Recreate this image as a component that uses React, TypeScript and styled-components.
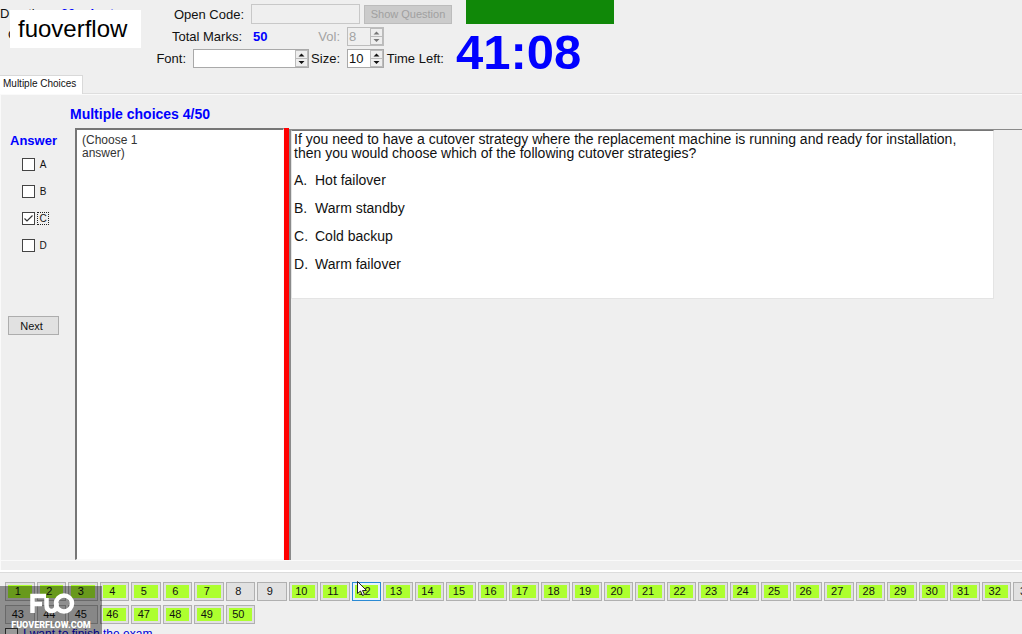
import React, { useState } from 'react';
import styled, { createGlobalStyle, css } from 'styled-components';

const Global = createGlobalStyle`
  * { box-sizing: border-box; }
  html, body { margin: 0; background: #efefef; }
  body, button, input, select { font-family: "Liberation Sans", Arial, sans-serif; }
  body { overflow: hidden; color: #111; }
`;

const Page = styled.div`
  position: relative;
  display: flex;
  flex-direction: column;
  height: 100vh;
  overflow: hidden;
  background: #efefef;
  font-size: 13px;
`;

const Header = styled.header`
  display: flex;
  flex: none;
  height: 75px;
`;

const Info = styled.div`
  flex: none;
  width: 156px;
  padding-top: 4px;
`;

const InfoRow = styled.div<{ $indent?: boolean }>`
  display: flex;
  gap: 8px;
  height: 21px;
  line-height: 20px;
  padding-left: ${(p) => (p.$indent ? '8px' : '0')};
  white-space: nowrap;
`;

const Fields = styled.div`
  flex: none;
  display: flex;
  flex-direction: column;
  width: 300px;
  padding-top: 3px;
`;

const FieldRow = styled.div`
  display: flex;
  align-items: center;
  height: 22px;
`;

const Label = styled.label<{ $width: number; $muted?: boolean }>`
  flex: none;
  width: ${(p) => p.$width}px;
  padding-right: 7px;
  text-align: right;
  white-space: nowrap;
  color: ${(p) => (p.$muted ? '#a3a3a3' : '#111')};
`;

const Value = styled.strong`
  color: #0000ff;
`;

const Marks = styled(Value)`
  width: 63px;
  padding-left: 4px;
`;

const CodeInput = styled.input`
  width: 109px;
  height: 20px;
  margin-right: 4px;
  padding: 0 3px;
  border: 1px solid #c8c8c8;
  background: #efefef;
`;

const PlainButton = styled.button`
  width: 88px;
  height: 19px;
  padding: 0;
  border: 1px solid #bcbcbc;
  background: #cbcbcb;
  color: #a0a0a0;
  font-size: 11px;
`;

const SpinBox = styled.span<{ $width: number; $muted?: boolean }>`
  flex: none;
  display: flex;
  width: ${(p) => p.$width}px;
  height: 19px;
  border: 1px solid ${(p) => (p.$muted ? '#bdbdbd' : '#a9a9a9')};
  background: ${(p) => (p.$muted ? '#efefef' : '#fff')};
`;

const boxText = css`
  flex: 1;
  min-width: 0;
  height: 17px;
  padding: 0 1px;
  border: 0;
  background: transparent;
  appearance: none;
  font-size: 13px;
  color: #111;
  &:disabled { color: #a3a3a3; }
`;

const SpinInput = styled.input`${boxText}`;
const FontSelect = styled.select`${boxText}`;

const Arrows = ({ muted }: { muted?: boolean }) => (
  <svg width="13" height="17" viewBox="0 0 13 17" aria-hidden="true">
    <rect x="0.5" y="0.5" width="12" height="8" fill="#eee" stroke="#bbb" />
    <rect x="0.5" y="8.5" width="12" height="8" fill="#eee" stroke="#bbb" />
    <path d="M3.500 6.500 6.500 3.500l3 3zM3.500 11 6.500 14l3-3z" fill={muted ? '#777' : '#111'} />
  </svg>
);

const Clock = styled.div`
  flex: 1;
`;

const TimeBar = styled.div`
  width: 148px;
  height: 24px;
  margin-left: 10px;
  background: #108808;
`;

const Time = styled.div`
  color: #0000ff;
  font-size: 49px;
  font-weight: bold;
  line-height: 56px;
`;

const Tabs = styled.div`
  flex: none;
  display: flex;
  height: 19px;
  border-bottom: 1px solid #dedede;
`;

const Tab = styled.button`
  height: 19px;
  padding: 0 6px 3px 3px;
  border: 1px solid #d9d9d9;
  border-width: 1px 1px 0 0;
  background: #fff;
  font-size: 10px;
  color: #111;
  white-space: nowrap;
`;

const Panel = styled.main`
  flex: 1;
  min-height: 0;
  display: flex;
  flex-direction: column;
  padding-bottom: 9px;
  border-top: 1px solid #fafafa;
  border-left: 1px solid #fafafa;
`;

const Title = styled.h1`
  flex: none;
  margin: 0;
  padding: 9px 0 0 69px;
  height: 33px;
  font-size: 14px;
  line-height: 20px;
  color: #0000ff;
`;

const Columns = styled.div`
  flex: 1;
  min-height: 0;
  display: flex;
  border-bottom: 1px solid #fafafa;
`;

const AnswerColumn = styled.form`
  flex: none;
  width: 74px;
  padding-top: 3px;
`;

const AnswerTitle = styled.h2`
  margin: 0 0 4px;
  padding-left: 9px;
  font-size: 13px;
  line-height: 20px;
  color: #0000ff;
`;

const Option = styled.label`
  display: flex;
  align-items: center;
  gap: 2px;
  height: 27px;
  padding: 0 0 8px 21px;
  font-size: 10px;
`;

const Tick = styled.input`
  flex: none;
  appearance: none;
  width: 13px;
  height: 13px;
  margin: 0;
  border: 1px solid #444;
  background: #fff;
`;

const TickWrap = styled.span`
  position: relative;
  display: flex;
  svg { position: absolute; left: 1px; top: 1px; pointer-events: none; }
`;

const OptionText = styled.span<{ $focused: boolean }>`
  width: 12px;
  height: 13px;
  line-height: 11px;
  text-align: center;
  border: 1px ${(p) => (p.$focused ? 'dotted #222' : 'solid transparent')};
`;

const NextButton = styled.button`
  width: 51px;
  height: 19px;
  margin: 53px 0 0 7px;
  padding: 0 4px 0 0;
  border: 1px solid #adadad;
  background: #e1e1e1;
  font-size: 11px;
  color: #111;
`;

const Hint = styled.section`
  flex: none;
  width: 209px;
  padding: 4px 120px 0 5px;
  border: 1px solid #fafafa;
  border-top: 2px solid #767676;
  border-left: 2px solid #767676;
  background: #fff;
  font-size: 12px;
  line-height: 13px;
  color: #333;
`;

const Splitter = styled.div`
  flex: none;
  width: 5px;
  background: #ff0000;
`;

const QuestionPane = styled.section`
  flex: 1;
  min-width: 0;
  margin-top: 1px;
  padding-right: 28px;
  border-top: 1px solid #8a8a8a;
  border-left: 2px solid #8a8a8a;
`;

const QuestionBox = styled.div`
  height: 169px;
  padding: 1px 0 0 2px;
  border: 1px solid #e4e4e4;
  border-top: 1px solid #767676;
  background: #fff;
  font-size: 14px;
  line-height: 14px;
  p { margin: 0 20px 6px 0; }
`;

const Choices = styled.ol`
  margin: 0;
  padding: 0;
  list-style: none;
  li { display: flex; line-height: 28px; }
  span { width: 21px; }
`;

const Footer = styled.footer`
  flex: none;
  height: 64px;
  padding: 10px 0 0 5px;
  border-top: 2px solid #fff;
  box-shadow: inset 0 1px #dcdcdc;
  overflow: hidden;
`;

const NumberRow = styled.nav`
  display: grid;
  grid-template-columns: repeat(33, minmax(0, 1fr));
  column-gap: 2px;
  margin: 0 -21px 4px 0;
`;

const NumberButton = styled.button<{ $done: boolean; $active: boolean }>`
  height: 19px;
  padding: 0 4px 0 0;
  border: 1px solid ${(p) => (p.$active ? '#2a8ad4' : '#b0b0b0')};
  background: ${(p) => (p.$done ? '#adff2f' : '#e1e1e1')};
  box-shadow: inset 0 0 0 2px ${(p) => (p.$active ? '#e5f1fb' : '#e1e1e1')};
  font-size: 11px;
  line-height: 17px;
  color: #111;
`;

const Finish = styled.label`
  display: flex;
  align-items: center;
  gap: 5px;
  height: 12px;
  font-size: 12px;
  line-height: 12px;
  white-space: nowrap;
  color: #0000d8;
`;

const Brand = styled.div`
  position: absolute;
  left: 10px;
  top: 10px;
  padding: 0 14px 0 8px;
  background: #fff;
  color: #000;
  font-size: 24px;
  line-height: 38px;
`;

const Watermark = styled.div`
  position: absolute;
  left: 0;
  bottom: 0;
  width: 102px;
  height: 48px;
  background: rgba(0, 0, 0, 0.4);
  pointer-events: none;
  color: #fff;
  font-family: Roboto, "Liberation Sans", sans-serif;
  font-size: 9px;
  font-weight: 900;
  line-height: 22px;
  text-align: center;
  svg { display: block; margin: 7px 0 0 29px; }
`;

const Cursor = styled.svg`
  position: absolute;
  left: 357px;
  bottom: 37px;
  pointer-events: none;
`;

const range = (from: number, to: number) =>
  Array.from({ length: to - from + 1 }, (_, i) => from + i);

const unanswered = [8, 9, 33, 43, 44, 45];
const choices = [
  ['A', 'Hot failover'],
  ['B', 'Warm standby'],
  ['C', 'Cold backup'],
  ['D', 'Warm failover'],
];

export default function App() {
  const [picked, setPicked] = useState('C');
  const row = (from: number, to: number, label: string) => (
    <NumberRow aria-label={label}>
      {range(from, to).map((n) => (
        <NumberButton key={n} $done={!unanswered.includes(n)} $active={n === 12}>
          {n}
        </NumberButton>
      ))}
    </NumberRow>
  );

  return (
    <Page>
      <Global />
      <Header>
        <Info>
          <InfoRow>Duration: <Value>60 minutes</Value></InfoRow>
          <InfoRow $indent>Q mark:</InfoRow>
        </Info>
        <Fields>
          <FieldRow>
            <Label htmlFor="code" $width={95}>Open Code:</Label>
            <CodeInput id="code" disabled />
            <PlainButton disabled>Show Question</PlainButton>
          </FieldRow>
          <FieldRow>
            <Label as="span" $width={93}>Total Marks:</Label>
            <Marks>50</Marks>
            <Label htmlFor="vol" $width={35} $muted>Vol:</Label>
            <SpinBox $width={37} $muted>
              <SpinInput id="vol" defaultValue="8" disabled />
              <Arrows muted />
            </SpinBox>
          </FieldRow>
          <FieldRow>
            <Label htmlFor="font" $width={37}>Font:</Label>
            <SpinBox $width={116}>
              <FontSelect id="font"><option /></FontSelect>
              <Arrows />
            </SpinBox>
            <Label htmlFor="size" $width={38}>Size:</Label>
            <SpinBox $width={37}>
              <SpinInput id="size" defaultValue="10" />
              <Arrows />
            </SpinBox>
            <Label as="span" $width={67}>Time Left:</Label>
          </FieldRow>
        </Fields>
        <Clock>
          <TimeBar />
          <Time>41:08</Time>
        </Clock>
      </Header>
      <Tabs role="tablist">
        <Tab role="tab" aria-selected="true">Multiple Choices</Tab>
      </Tabs>
      <Panel>
        <Title>Multiple choices 4/50</Title>
        <Columns>
          <AnswerColumn>
            <AnswerTitle>Answer</AnswerTitle>
            {choices.map(([letter]) => (
              <Option key={letter}>
                <TickWrap>
                  <Tick
                    type="checkbox"
                    checked={picked === letter}
                    onChange={() => setPicked(letter)}
                  />
                  {picked === letter && (
                    <svg width="11" height="11" viewBox="0 0 11 11" aria-hidden="true">
                      <path d="M1.500 5.500 4 8l5.500-5.500" fill="none" stroke="#333" strokeWidth="1.200" />
                    </svg>
                  )}
                </TickWrap>
                <OptionText $focused={picked === letter}>{letter}</OptionText>
              </Option>
            ))}
            <NextButton type="button">Next</NextButton>
          </AnswerColumn>
          <Hint>(Choose 1 answer)</Hint>
          <Splitter />
          <QuestionPane>
            <QuestionBox>
              <p>
                If you need to have a cutover strategy where the replacement machine is running
                and ready for installation, then you would choose which of the following cutover
                strategies?
              </p>
              <Choices>
                {choices.map(([letter, text]) => (
                  <li key={letter}><span>{letter}.</span>{text}</li>
                ))}
              </Choices>
            </QuestionBox>
          </QuestionPane>
        </Columns>
      </Panel>
      <Footer>
        {row(1, 33, 'Questions 1 to 33')}
        {row(43, 50, 'Questions 43 to 50')}
        <Finish><Tick type="checkbox" />I want to finish the exam</Finish>
      </Footer>
      <Brand>fuoverflow</Brand>
      <Watermark>
        <svg width="46" height="21" viewBox="0 0 46 21" aria-hidden="true">
          <g fill="none" stroke="#fff" strokeWidth="4.500">
            <path d="M3.500 20V3H17M3 11h10" />
            <path d="M17.500 5v7q0 6 5 6t5-6v-2" />
            <circle cx="35" cy="10.500" r="8" />
          </g>
        </svg>
        FUOVERFLOW.COM
      </Watermark>
      <Cursor width="10" height="16" viewBox="0 0 10 16" aria-hidden="true">
        <path d="M.5.5v12l3-2.500 2 4.500 2-1-2-4h4z" fill="#fff" stroke="#222" />
      </Cursor>
    </Page>
  );
}
